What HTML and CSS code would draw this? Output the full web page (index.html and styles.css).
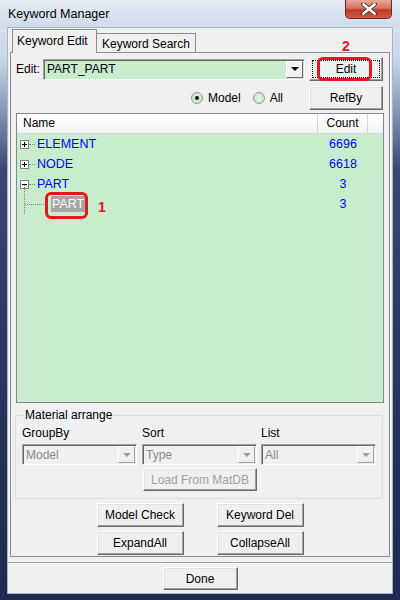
FILE: index.html
```html
<!DOCTYPE html>
<html lang="en">
  <head>
    <meta charset="UTF-8" />
    <meta name="viewport" content="width=device-width, initial-scale=1.0" />
    <title>Keyword Manager</title>
    <link rel="stylesheet" href="styles.css">
  </head>
  <body>
    <div class="window">
      <div class="titlebar">
        <span class="title">Keyword Manager</span>
        <div class="close">
          <svg width="16" height="12" viewBox="0 0 16 12">
            <path d="M2 1 L14 11 M14 1 L2 11" stroke="#3a3a3a" stroke-width="4.2" stroke-linecap="round" />
            <path d="M2.3 1.3 L13.7 10.7 M13.7 1.3 L2.3 10.7" stroke="#ffffff" stroke-width="2.4" stroke-linecap="round" />
          </svg>
        </div>
      </div>

      <div class="client">
        <div class="tabs">
          <div class="tab active">Keyword Edit</div>
          <div class="tab">Keyword Search</div>
        </div>

        <div class="panel">
          <div class="edit-row">
            <label class="edit-label" for="kw">Edit:</label>
            <div class="combo green">
              <span class="combo-text" id="kw">PART_PART</span>
              <span class="drop"><i class="arrow"></i></span>
            </div>
            <div class="mark-wrap">
              <button class="btn btn-wide focused">Edit</button>
              <span class="mark-box mark-edit"></span>
              <span class="mark-num mark-num-2">2</span>
            </div>
          </div>

          <div class="radio-row">
            <span class="radio checked"></span><span class="radio-label">Model</span>
            <span class="radio"></span><span class="radio-label">All</span>
            <button class="btn btn-wide">RefBy</button>
          </div>

          <div class="list">
            <div class="list-head">
              <div class="col-name">Name</div>
              <div class="col-count">Count</div>
              <div class="col-rest"></div>
            </div>
            <div class="list-body">
              <div class="item">
                <div class="name-cell">
                  <svg class="expander" width="9" height="9" viewBox="0 0 9 9">
                    <rect x="0.5" y="0.5" width="8" height="8" fill="#fff" stroke="#808080" />
                    <path d="M2 4.5 H7 M4.5 2 V7" stroke="#000" />
                  </svg>
                  <span class="dots"></span>
                  <span class="item-name">ELEMENT</span>
                </div>
                <span class="item-count">6696</span>
              </div>
              <div class="item">
                <div class="name-cell">
                  <svg class="expander" width="9" height="9" viewBox="0 0 9 9">
                    <rect x="0.5" y="0.5" width="8" height="8" fill="#fff" stroke="#808080" />
                    <path d="M2 4.5 H7 M4.5 2 V7" stroke="#000" />
                  </svg>
                  <span class="dots"></span>
                  <span class="item-name">NODE</span>
                </div>
                <span class="item-count">6618</span>
              </div>
              <div class="item">
                <div class="name-cell">
                  <svg class="expander" width="9" height="9" viewBox="0 0 9 9">
                    <rect x="0.5" y="0.5" width="8" height="8" fill="#fff" stroke="#808080" />
                    <path d="M2 4.5 H7" stroke="#000" />
                  </svg>
                  <span class="dots"></span>
                  <span class="item-name">PART</span>
                </div>
                <span class="item-count">3</span>
              </div>
              <div class="item child">
                <div class="name-cell">
                  <span class="vline"></span>
                  <span class="dots long"></span>
                  <span class="item-name selected">PART</span>
                  <span class="mark-box mark-part"></span>
                  <span class="mark-num mark-num-1">1</span>
                </div>
                <span class="item-count">3</span>
              </div>
            </div>
          </div>

          <fieldset class="group">
            <legend>Material arrange</legend>
            <div class="group-grid">
              <div class="field">
                <span class="field-label">GroupBy</span>
                <div class="combo disabled"><span class="combo-text">Model</span><span class="drop"><i class="arrow"></i></span></div>
              </div>
              <div class="field">
                <span class="field-label">Sort</span>
                <div class="combo disabled"><span class="combo-text">Type</span><span class="drop"><i class="arrow"></i></span></div>
              </div>
              <div class="field">
                <span class="field-label">List</span>
                <div class="combo disabled"><span class="combo-text">All</span><span class="drop"><i class="arrow"></i></span></div>
              </div>
            </div>
            <div class="load-row">
              <button class="btn btn-load" disabled>Load From MatDB</button>
            </div>
          </fieldset>

          <div class="btn-row">
            <button class="btn btn-mid">Model Check</button>
            <button class="btn btn-mid">Keyword Del</button>
          </div>
          <div class="btn-row">
            <button class="btn btn-mid">ExpandAll</button>
            <button class="btn btn-mid">CollapseAll</button>
          </div>
        </div>

        <div class="separator"></div>
        <div class="footer">
          <button class="btn btn-done">Done</button>
        </div>
      </div>
    </div>
  </body>
</html>
```

FILE: styles.css
```css
body {
  margin: 0;
  font-family: "Liberation Sans", Arial, sans-serif;
  font-size: 12px;
  color: #000;
}
.window {
  width: 400px;
  height: 600px;
  display: flex;
  flex-direction: column;
  position: relative;
  background: linear-gradient(#e2eaf3 0px, #c9d6e7 60px, #8796b6 110px, #3a4872 170px, #26335c 400px, #1f2a50 600px);
}
.titlebar {
  height: 28px;
  display: flex;
  align-items: center;
  padding-left: 8px;
  background: linear-gradient(#e4ecf5, #cfdbea);
}
.title {
  font-size: 12.5px;
  color: #000;
}
.close {
  position: absolute;
  left: 345px;
  top: 0;
  width: 47px;
  height: 19px;
  border: 1px solid #6b2a22;
  border-top: none;
  border-radius: 0 0 5px 5px;
  box-sizing: border-box;
  background: linear-gradient(#e9a99b 0%, #d7735f 45%, #c0392a 55%, #cf5a40 100%);
  display: flex;
  align-items: center;
  justify-content: center;
}
.client {
  margin: 0 8px 7px;
  flex: 1;
  background: #f0f0f0;
  display: flex;
  flex-direction: column;
  box-shadow: 0 0 0 1px #a9b4c8;
}

/* tabs */
.tabs {
  display: flex;
  align-items: flex-end;
  height: 24px;
  padding-left: 4px;
  position: relative;
  z-index: 1;
}
.tab {
  height: 19px;
  line-height: 20px;
  padding: 0 0 0 5px;
  border: 1px solid #898c95;
  border-bottom: none;
  background: #f0f0f0;
  box-sizing: border-box;
  white-space: nowrap;
}
.tab.active {
  height: 24px;
  line-height: 22px;
  margin-bottom: -1px;
  padding: 0 0 0 4px;
  width: 85px;
}
.tab + .tab {
  border-left: none;
  width: 99px;
}
.panel {
  margin-left: 2px;
  width: 380px;
  height: 505px;
  box-sizing: border-box;
  border: 1px solid #898c95;
  padding: 4px 6px 0 5px;
  display: flex;
  flex-direction: column;
}

/* edit row */
.edit-row {
  display: flex;
  align-items: center;
  height: 24px;
}
.edit-label {
  width: 27px;
}
.combo {
  display: flex;
  align-items: center;
  height: 21px;
  box-sizing: border-box;
  border: 1px solid;
  border-color: #a0a0a0 #fff #fff #a0a0a0;
  box-shadow: inset 1px 1px #696969;
  background: #fff;
}
.combo.green {
  width: 262px;
  background: #c7edcc;
}
.combo-text {
  flex: 1;
  padding-left: 3px;
}
.drop {
  width: 17px;
  height: 17px;
  margin-right: 1px;
  box-sizing: border-box;
  border: 1px solid;
  border-color: #fff #696969 #696969 #fff;
  background: #f0f0f0;
  display: flex;
  align-items: center;
  justify-content: center;
}
.arrow {
  width: 0;
  height: 0;
  border-left: 4px solid transparent;
  border-right: 4px solid transparent;
  border-top: 4px solid #000;
}
.combo.disabled {
  width: 115px;
  background: #f0f0f0;
  color: #8a8a8a;
}
.combo.disabled .arrow {
  border-top-color: #a0a0a0;
}
.combo.disabled .drop {
  border-color: #fff #a0a0a0 #a0a0a0 #fff;
}

/* buttons */
.btn {
  font-family: "Liberation Sans", Arial, sans-serif;
  font-size: 12px;
  color: #000;
  background: #f0f0f0;
  border: 1px solid;
  border-color: #fff #696969 #696969 #fff;
  box-shadow: inset -1px -1px #a0a0a0, inset 1px 1px #e3e3e3;
  padding: 0;
  height: 24px;
  box-sizing: border-box;
}
.btn:disabled {
  color: #a0a0a0;
}
.btn-wide {
  width: 74px;
  margin-left: auto;
}
.btn.focused {
  outline: 1px dotted #000;
  outline-offset: -4px;
}
.mark-wrap {
  position: relative;
  margin-left: 4px;
}
.mark-wrap .btn-wide {
  display: block;
}
.mark-box {
  position: absolute;
  border: 3px solid #e8141e;
  border-radius: 6px;
  box-sizing: border-box;
}
.mark-edit {
  left: 8px;
  top: 0;
  width: 55px;
  height: 24px;
}
.mark-num {
  position: absolute;
  color: #e8141e;
  font-weight: bold;
  font-size: 14px;
}
.mark-num-2 {
  left: 33px;
  top: -19px;
}

/* radio row */
.radio-row {
  display: flex;
  align-items: center;
  height: 23px;
  margin-top: 5px;
}
.radio {
  width: 12px;
  height: 12px;
  border-radius: 50%;
  box-sizing: border-box;
  border: 1px solid #9a9a9a;
  background: radial-gradient(circle, #e2f5e5 0%, #c7edcc 60%, #b3d8b8 100%);
  display: flex;
  align-items: center;
  justify-content: center;
  margin-right: 5px;
}
.radio:first-child {
  margin-left: 175px;
}
.radio.checked::after {
  content: "";
  width: 4px;
  height: 4px;
  border-radius: 50%;
  background: #000;
}
.radio-label {
  margin-right: 12px;
}

/* list view */
.list {
  margin-top: 4px;
  width: 368px;
  height: 290px;
  box-sizing: border-box;
  border: 1px solid #828790;
  display: flex;
  flex-direction: column;
}
.list-head {
  display: flex;
  height: 20px;
  background: linear-gradient(#ffffff, #f3f3f3);
  border-bottom: 1px solid #d5d5d5;
  box-sizing: border-box;
}
.list-head > div {
  line-height: 19px;
  box-sizing: border-box;
  border-right: 1px solid #d5d5d5;
}
.col-name {
  width: 301px;
  padding-left: 6px;
}
.col-count {
  width: 50px;
  text-align: center;
}
.col-rest {
  flex: 1;
  border-right: none !important;
}
.list-body {
  flex: 1;
  background: #c7edcc;
}
.item {
  display: flex;
  align-items: center;
  height: 20px;
  color: #0000ff;
  font-size: 12.5px;
}
.name-cell {
  width: 301px;
  display: flex;
  align-items: center;
  padding-left: 3px;
  box-sizing: border-box;
  position: relative;
  height: 100%;
}
.expander {
  display: block;
  flex: none;
}
.dots {
  width: 6px;
  border-top: 1px dotted #808080;
  margin-right: 2px;
}
.child .name-cell {
  padding-left: 8px;
}
.dots.long {
  width: 21px;
  margin-right: 5px;
}
.vline {
  position: absolute;
  left: 7px;
  top: -9px;
  height: 29px;
  border-left: 1px dotted #808080;
}
.item-name.selected {
  background: #a5a5a5;
  color: #fff;
  padding: 1px 2px 1px 1px;
}
.item-count {
  width: 50px;
  text-align: center;
}
.mark-part {
  left: 28px;
  top: -2px;
  width: 43px;
  height: 27px;
}
.mark-num-1 {
  left: 81px;
  top: 5px;
}

/* group box */
.group {
  margin: 5px 0 0 -1px;
  width: 368px;
  height: 91px;
  box-sizing: border-box;
  border: 1px solid #d5dfe5;
  border-radius: 2px;
  padding: 0 6px 0 6px;
}
.group legend {
  padding: 0 1px;
  margin-left: 2px;
}
.group-grid {
  display: flex;
  gap: 4px;
  margin-top: 3px;
}
.field {
  display: flex;
  flex-direction: column;
}
.field:first-child {
  margin-right: 1px;
}
.field-label {
  height: 19px;
  line-height: 16px;
}
.load-row {
  display: flex;
  padding-left: 121px;
  margin-top: 3px;
}
.btn-load {
  width: 114px;
  height: 23px;
}
.btn-row {
  display: flex;
  justify-content: center;
  gap: 33px;
  margin-top: 4px;
  padding-left: 1px;
}
.btn-mid {
  width: 87px;
}

/* footer */
.separator {
  margin-top: 5px;
  height: 1px;
  background: #a0a0a0;
  border-bottom: 1px solid #fff;
}
.footer {
  display: flex;
  justify-content: center;
  padding-top: 3px;
}
.btn-done {
  width: 75px;
  height: 23px;
}
```
